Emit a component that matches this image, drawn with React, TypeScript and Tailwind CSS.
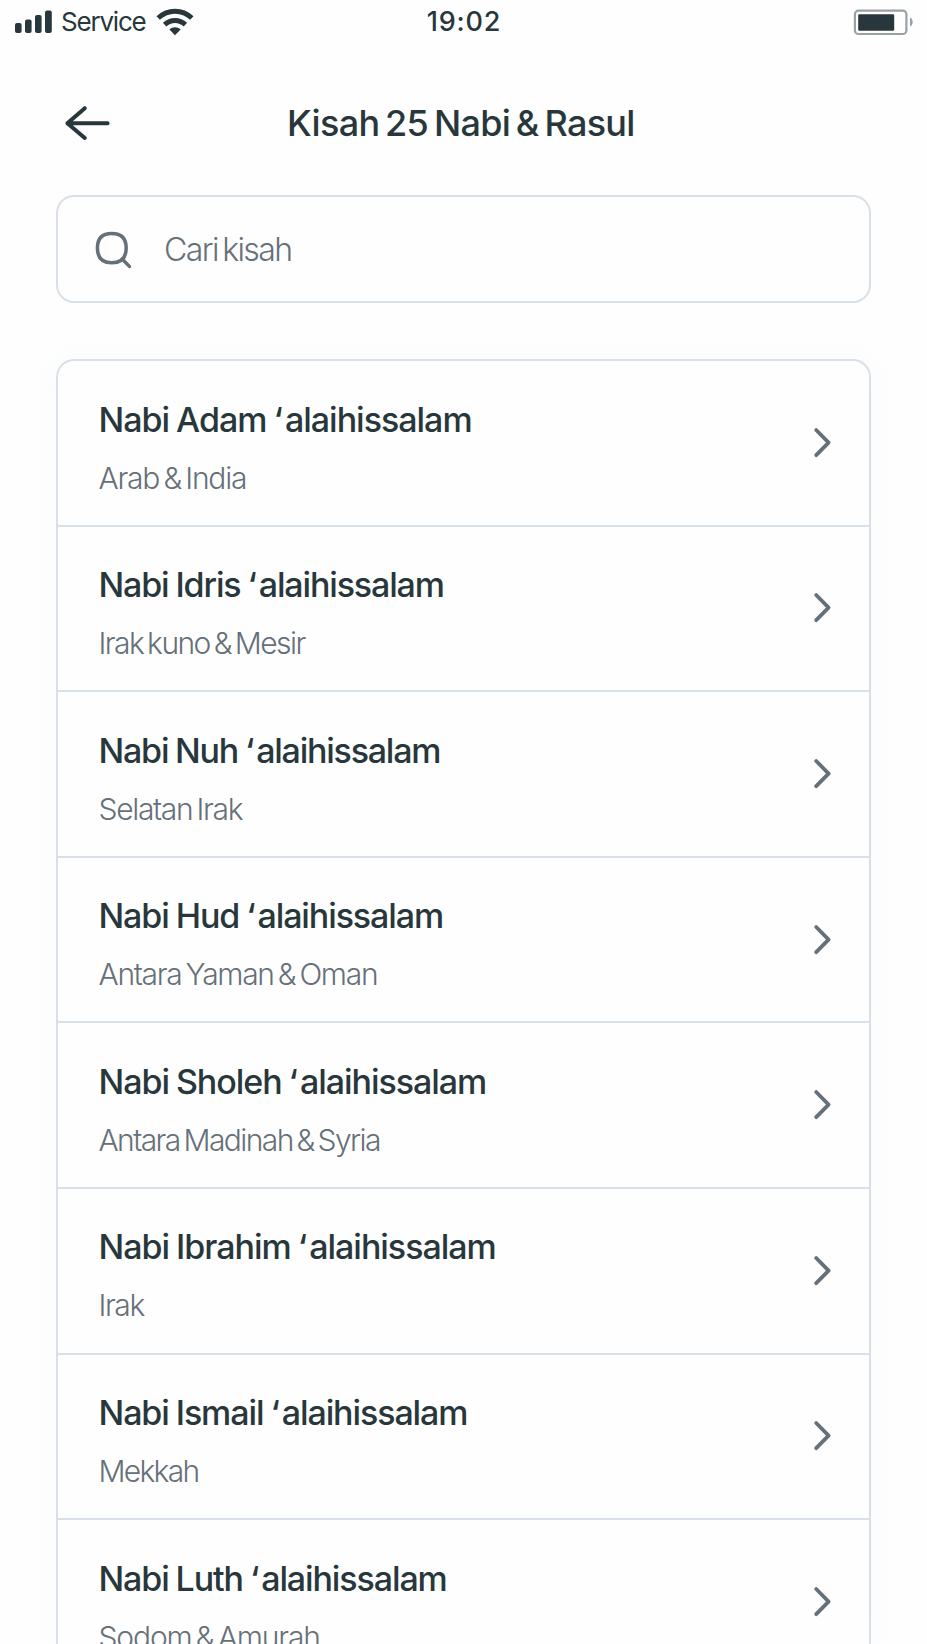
type Story = {
  name: string
  place: string
  nameClass: string
  placeClass: string
}

const stories: Story[] = [
  { name: "Nabi Adam", place: "Arab & India", nameClass: "tracking-[-1.01px]", placeClass: "tracking-[-1.2px]" },
  { name: "Nabi Idris", place: "Irak kuno & Mesir", nameClass: "tracking-[-1.14px]", placeClass: "tracking-[-1.56px]" },
  { name: "Nabi Nuh", place: "Selatan Irak", nameClass: "tracking-[-1.22px]", placeClass: "tracking-[-1.32px]" },
  { name: "Nabi Hud", place: "Antara Yaman & Oman", nameClass: "tracking-[-1.1px]", placeClass: "tracking-[-1.3px]" },
  { name: "Nabi Sholeh", place: "Antara Madinah & Syria", nameClass: "tracking-[-1.05px]", placeClass: "tracking-[-1.59px]" },
  { name: "Nabi Ibrahim", place: "Irak", nameClass: "tracking-[-1.02px]", placeClass: "tracking-[-1.4px]" },
  { name: "Nabi Ismail", place: "Mekkah", nameClass: "tracking-[-1.09px]", placeClass: "tracking-[-1.72px]" },
  { name: "Nabi Luth", place: "Sodom & Amurah", nameClass: "tracking-[-1.11px]", placeClass: "tracking-[-1.14px]" },
]

function StatusBar() {
  return (
    <div className="grid h-[42px] grid-cols-3 items-center pl-[15px] pr-[14px]">
      <div className="flex items-center">
        <svg width="38" height="24" viewBox="0 0 38 24" fill="currentColor">
          <rect x="0" y="13" width="6.6" height="10" rx="2" />
          <rect x="10" y="9.4" width="6.6" height="13.6" rx="2" />
          <rect x="20" y="5" width="6.6" height="18" rx="2" />
          <rect x="30" y="0.4" width="6.8" height="22.6" rx="2" />
        </svg>
        <span className="ml-[8px] pt-px text-[26px] leading-[42px] tracking-[-1.2px]">Service</span>
        <svg className="ml-[10px]" width="38" height="28" viewBox="0 0 38 28" fill="none" stroke="currentColor" strokeWidth="5">
          <path d="M2.2 10C12 1 26 1 35.800 10" />
          <path d="M8.600 16.600C14.500 11 23.500 11 29.400 16.600" />
          <path d="M13.400 21.400c3.300-3 7.900-3 11.200 0L19 27.200z" fill="currentColor" stroke="none" />
        </svg>
      </div>
      <span className="pt-px text-center text-[27px] font-medium leading-[42px] tracking-[0.8px]">19:02</span>
      <svg className="justify-self-end" width="60" height="28" viewBox="0 0 60 28">
        <rect x="1.9" y="2.6" width="51.5" height="23.4" rx="3.6" fill="none" stroke="#9aa2a5" strokeWidth="2.2" />
        <rect x="5.2" y="6.2" width="36" height="16.6" rx="1.2" fill="currentColor" />
        <path d="M57 9.5c3.6 1.6 3.6 7.4 0 9z" fill="#9aa2a5" />
      </svg>
    </div>
  )
}

function Chevron() {
  return (
    <svg width="20" height="34" viewBox="0 0 20 34" fill="none" stroke="#667079" strokeWidth="3.8" strokeLinecap="round" strokeLinejoin="round">
      <path d="M3.2 4L15.6 16.6L3.2 29.200" />
    </svg>
  )
}

function StoryRow({ story }: { story: Story }) {
  return (
    <li className="flex h-[165.6px] shrink-0 items-center justify-between border-b-2 border-[#dae0e8] pl-[40.5px] pr-[36px]">
      <div className="h-full whitespace-nowrap pt-[38.5px]">
        <h2 className={`text-[34px] font-medium leading-[40px] [word-spacing:-1px] ${story.nameClass}`}>
          {story.name} <span className="mr-[3px]">‘</span>alaihissalam
        </h2>
        <p className={`mt-5 text-[30px] font-light leading-[36px] text-[#667079] [word-spacing:-3px] ${story.placeClass}`}>
          {story.place}
        </p>
      </div>
      <Chevron />
    </li>
  )
}

export default function App() {
  return (
    <div className="flex h-[1644px] flex-col overflow-hidden bg-[#fefefe] font-['Inter','Liberation_Sans',sans-serif] text-[#28373b]">
      <StatusBar />

      {/* Header */}
      <header className="flex h-[153px] items-center pl-[64px] pt-[8px]">
        <svg width="48" height="36" viewBox="0 0 48 36" fill="none" stroke="currentColor" strokeWidth="4" strokeLinecap="round" strokeLinejoin="round">
          <path d="M20.8 3.2L3.4 18.2L20.8 33M3.400 18.2H43.6" />
        </svg>
        <h1 className="ml-[175px] whitespace-nowrap pt-px text-[36px] font-medium leading-[44px] tracking-[-0.68px] [word-spacing:-3.2px]">
          Kisah 25 Nabi &amp; Rasul
        </h1>
      </header>

      {/* Search */}
      <div className="mx-[56px] flex h-[108px] w-[815px] shrink-0 items-center rounded-[18px] border-2 border-[#dae0e8] pl-[35px] pt-[2px]">
        <svg width="42" height="42" viewBox="0 0 42 42" fill="none" stroke="#667079" strokeWidth="3.5">
          <path d="M18.8 4.4C28.500 4.400 33.200 9.200 33.200 19S28.500 33.800 18.800 33.800S4.400 28.800 4.400 19S9.100 4.400 18.800 4.400z" />
          <path d="M29.2 30L36.400 37.400" strokeLinecap="round" />
        </svg>
        <span className="ml-[29px] text-[32px] font-light tracking-[-1.6px] text-[#667079] [word-spacing:-3px]">Cari kisah</span>
      </div>

      {/* Story list */}
      <ul className="mx-[56px] mt-[56px] flex w-[815px] flex-1 flex-col overflow-hidden rounded-t-[18px] border-2 border-b-0 border-[#dae0e8] shadow-[0_0_28px_rgba(200,215,230,0.1)]">
        {stories.map((story) => (
          <StoryRow key={story.name} story={story} />
        ))}
      </ul>
    </div>
  )
}
